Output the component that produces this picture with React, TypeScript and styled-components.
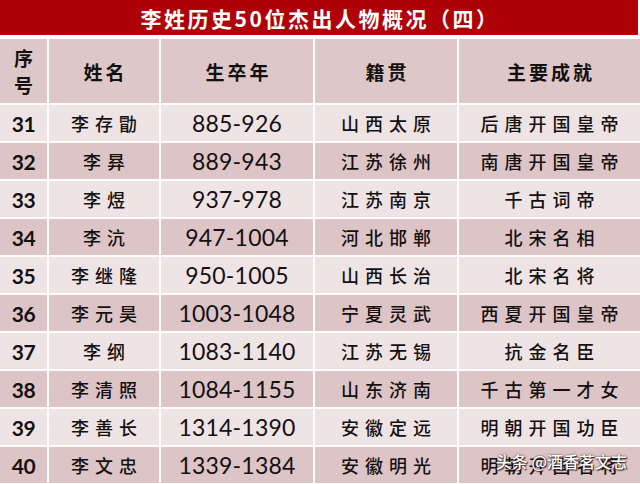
import React from 'react';
import styled, {createGlobalStyle} from 'styled-components';

const GlobalStyle = createGlobalStyle`
    html, body {
        margin: 0;
        padding: 0;
        background: #ffffff;
    }
    #root {
        width: 640px;
        height: 484px;
        overflow: hidden;
    }
`;

const CJK = `"Noto Sans CJK SC", "Noto Sans", sans-serif`;
const NUM = `Lato, "Open Sans", "Noto Sans CJK SC", sans-serif`;

type Person = {
	no: number;
	name: string;
	years: string;
	home: string;
	deed: string;
};

const people: Person[] = [
	{no: 31, name: '李存勖', years: '885-926', home: '山西太原', deed: '后唐开国皇帝'},
	{no: 32, name: '李昪', years: '889-943', home: '江苏徐州', deed: '南唐开国皇帝'},
	{no: 33, name: '李煜', years: '937-978', home: '江苏南京', deed: '千古词帝'},
	{no: 34, name: '李沆', years: '947-1004', home: '河北邯郸', deed: '北宋名相'},
	{no: 35, name: '李继隆', years: '950-1005', home: '山西长治', deed: '北宋名将'},
	{no: 36, name: '李元昊', years: '1003-1048', home: '宁夏灵武', deed: '西夏开国皇帝'},
	{no: 37, name: '李纲', years: '1083-1140', home: '江苏无锡', deed: '抗金名臣'},
	{no: 38, name: '李清照', years: '1084-1155', home: '山东济南', deed: '千古第一才女'},
	{no: 39, name: '李善长', years: '1314-1390', home: '安徽定远', deed: '明朝开国功臣'},
	{no: 40, name: '李文忠', years: '1339-1384', home: '安徽明光', deed: '明朝开国名将'},
];

const Page = styled.div`
    position: relative;
    width: 640px;
    height: 484px;
    background: #ffffff;
    display: flex;
    flex-direction: column;
    gap: 4px;
`;

const TitleBar = styled.div`
    height: 35px;
    background: #af0208;
    border-right: 2px solid #ffffff;
    display: flex;
    align-items: center;
    justify-content: center;
    color: #ffffff;
    font-family: ${CJK};
    font-weight: 700;
    font-size: 21px;
    letter-spacing: 2.5px;
    padding-left: 2px;
`;

const Table = styled.div`
    display: grid;
    grid-template-columns: 47px 110px 152px 142px 1fr;
    grid-template-rows: 64px;
    grid-auto-rows: 36px;
    column-gap: 2px;
    row-gap: 2px;
`;

const Cell = styled.div<{ $shade: 'head' | 'light' | 'dark' }>`
    display: flex;
    align-items: center;
    justify-content: center;
    background: ${p => p.$shade === 'head' ? '#dec7c9' : p.$shade === 'dark' ? '#ddc4c6' : '#efe4e5'};
    color: #141010;
    overflow: hidden;
    white-space: nowrap;
`;

const HeadText = styled.span`
    font-family: ${CJK};
    font-weight: 700;
    font-size: 19px;
    letter-spacing: 3px;
    padding-left: 3px;
`;

const StackHead = styled.span`
    font-family: ${CJK};
    font-weight: 700;
    font-size: 19px;
    line-height: 27px;
    text-align: center;
    white-space: normal;
    width: 20px;
`;

const NoText = styled.span`
    font-family: ${NUM};
    font-weight: 700;
    font-size: 21px;
    letter-spacing: -0.5px;
`;

const YearText = styled.span`
    font-family: ${NUM};
    font-weight: 400;
    font-size: 23px;
    letter-spacing: 0.2px;
`;

const WordText = styled.span`
    font-family: ${CJK};
    font-weight: 500;
    font-size: 18px;
    letter-spacing: 6px;
    padding-left: 6px;
`;

const Watermark = styled.div`
    position: absolute;
    right: 13px;
    bottom: 11px;
    color: #ffffff;
    font-family: ${CJK};
    font-size: 16px;
    font-weight: 500;
    text-shadow: 0 0 2px rgba(40, 20, 20, 0.95), 1px 1px 1px rgba(40, 20, 20, 0.85);
`;

export default function App() {
	return (
		<>
			<GlobalStyle/>
			<Page>
				<TitleBar>李姓历史50位杰出人物概况（四）</TitleBar>
				<Table>
					<Cell $shade="head"><StackHead>序号</StackHead></Cell>
					<Cell $shade="head"><HeadText>姓名</HeadText></Cell>
					<Cell $shade="head"><HeadText>生卒年</HeadText></Cell>
					<Cell $shade="head"><HeadText>籍贯</HeadText></Cell>
					<Cell $shade="head"><HeadText>主要成就</HeadText></Cell>
					{people.map((p, i) => {
						const shade = i % 2 === 0 ? 'light' : 'dark';
						return (
							<React.Fragment key={p.no}>
								<Cell $shade={shade}><NoText>{p.no}</NoText></Cell>
								<Cell $shade={shade}><WordText>{p.name}</WordText></Cell>
								<Cell $shade={shade}><YearText>{p.years}</YearText></Cell>
								<Cell $shade={shade}><WordText>{p.home}</WordText></Cell>
								<Cell $shade={shade}><WordText>{p.deed}</WordText></Cell>
							</React.Fragment>
						);
					})}
				</Table>
				<Watermark>头条 @酒香茗文志</Watermark>
			</Page>
		</>
	);
}
